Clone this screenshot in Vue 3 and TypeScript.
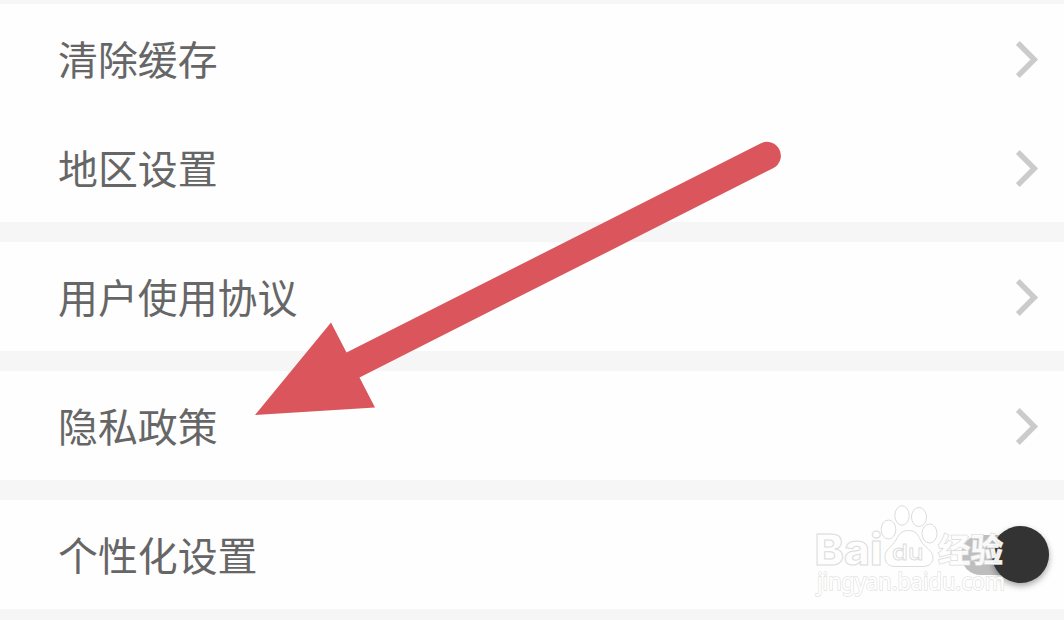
<script setup lang="ts">
interface Item {
  label: string
  toggle?: boolean
}

const groups: Item[][] = [
  [{ label: '清除缓存' }, { label: '地区设置' }],
  [{ label: '用户使用协议' }],
  [{ label: '隐私政策' }],
  [{ label: '个性化设置', toggle: true }],
]
</script>

<template>
  <main class="screen">
    <section v-for="(group, i) in groups" :key="i" class="group">
      <div v-for="item in group" :key="item.label" class="row">
        <span class="label">{{ item.label }}</span>
        <span v-if="item.toggle" class="switch"><span class="thumb"></span></span>
        <svg v-else class="chevron" width="26" height="40" viewBox="0 0 26 40">
          <path d="M4.800 4 L21.300 20.500 L4.800 37" />
        </svg>
      </div>
    </section>

    <svg class="overlay" width="1064" height="620" viewBox="0 0 1064 620">
      <g class="mark">
        <text class="brand" x="814.500" y="564.500" textLength="68" lengthAdjust="spacingAndGlyphs">Bai</text>
        <ellipse cx="888.500" cy="529.500" rx="7.300" ry="9.500" />
        <ellipse cx="902" cy="515.500" rx="7.200" ry="9.700" />
        <ellipse cx="919" cy="517" rx="7.500" ry="9.500" />
        <ellipse cx="929.500" cy="533.500" rx="7.500" ry="9.500" />
        <path d="M908.500 530.500 C916 530.500 918 535 921 541 C924 547 933 550 933 558 C933 564 928 566.500 922 566.500 L895 566.500 C889 566.500 885 563 885 557 C885 549 892 547 896 540 C899 534 902 530.500 908.500 530.500 Z" />
        <text class="du" x="892" y="560" textLength="31.500" lengthAdjust="spacingAndGlyphs">du</text>
        <text class="cn" x="938" y="561.500" textLength="65" lengthAdjust="spacingAndGlyphs">经验</text>
        <text class="url" x="817" y="590" textLength="188" lengthAdjust="spacingAndGlyphs">jingyan.baidu.com</text>
      </g>
      <path
        class="arrow"
        d="M255 415 L331 322.500 L346.500 352.500 L760.500 143.500 A13.800 13.800 0 0 1 773.500 168 L359.500 377.500 L375 407.500 Z"
      />
    </svg>
  </main>
</template>

<style>
body {
  margin: 0;
}
</style>

<style scoped>
.screen {
  position: relative;
  box-sizing: border-box;
  width: 1064px;
  height: 620px;
  padding-top: 4px;
  overflow: hidden;
  display: flex;
  flex-direction: column;
  gap: 20px;
  background: #f6f6f6;
  font-family: "Noto Sans CJK SC", sans-serif;
}

.group {
  flex: none;
  background: #fefefe;
}

.row {
  box-sizing: border-box;
  height: 109px;
  padding: 0 15px 0 58px;
  display: flex;
  align-items: center;
  justify-content: space-between;
}

.label {
  color: #666;
  font-size: 39.9px;
  line-height: 60px;
  padding-bottom: 1px;
}

.chevron {
  margin-top: 1px;
}

.chevron path {
  fill: none;
  stroke: #cbcbcb;
  stroke-width: 5.4;
}

.row:has(.chevron) {
  padding-right: 25px;
}

.switch {
  width: 88px;
  height: 40px;
  border-radius: 20px;
  background: #bebebe;
  display: flex;
  align-items: center;
  justify-content: flex-end;
}

.thumb {
  flex: none;
  width: 57px;
  height: 57px;
  border-radius: 50%;
  background: #333;
  box-shadow: 0 3px 6px rgba(0, 0, 0, 0.35);
}

.overlay {
  position: absolute;
  inset: 0;
}

.arrow {
  fill: #da565c;
}

.mark {
  fill: rgba(255, 255, 255, 0.85);
  stroke: #dcdcdc;
  stroke-width: 1;
}

.brand {
  font: 800 43px Inter, sans-serif;
}

.du {
  font: 500 22px Inter, sans-serif;
  stroke-width: 0.8;
}

.cn {
  font: 700 33px "Noto Sans CJK SC", sans-serif;
  paint-order: stroke;
  stroke-width: 1.5;
  fill: #fff;
  fill-opacity: 0.92;
}

.url {
  font: 23px "Noto Sans", sans-serif;
  paint-order: stroke;
  stroke: #e0e0e0;
  stroke-width: 1.5;
  stroke-opacity: 0.9;
  fill: #fff;
}
</style>
